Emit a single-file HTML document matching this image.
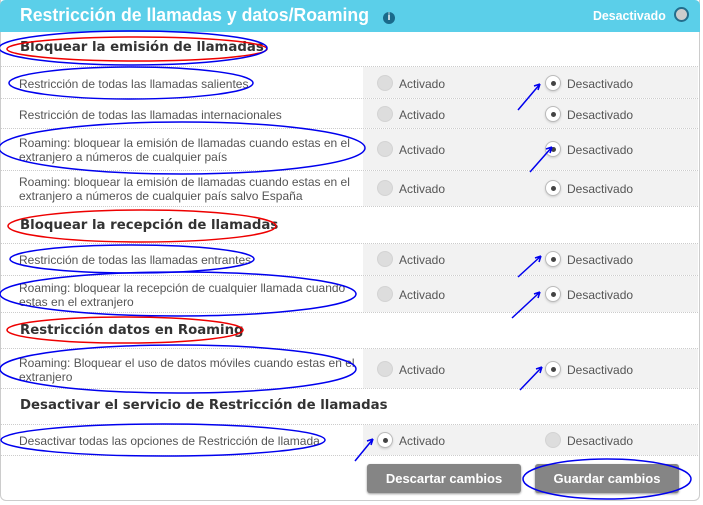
<!DOCTYPE html>
<html><head><meta charset="utf-8"><style>
*{margin:0;padding:0;box-sizing:border-box}
body{width:703px;height:505px;background:#fff;font-family:"Liberation Sans",Arial,sans-serif;position:relative;overflow:hidden}
.panel{position:absolute;left:0;top:0;width:700px;height:501px;border:1px solid #ccc;border-top:none;border-radius:0 0 6px 6px}
.hdr{position:absolute;left:0;top:0;width:700px;height:32px;background:#5bcfe9;border-radius:5px 5px 0 0}
.title{position:absolute;left:20px;top:5px;color:#fff;font-weight:bold;font-size:18px;white-space:nowrap;transform:scaleX(.98);transform-origin:left}
.info{position:absolute;left:383px;top:12px;width:12px;height:12px;border-radius:50%;background:#1a6a8a;color:#fff;font-size:10px;font-weight:bold;text-align:center;line-height:12px}
.hd{position:absolute;left:593px;top:8px;color:#fff;font-weight:bold;font-size:13px;transform:scaleX(.95);transform-origin:left}
.ht{position:absolute;left:674px;top:7px;width:15px;height:15px;border-radius:50%;background:#ccc;border:2px solid #236d8c}
.sec{position:absolute;left:20px;font-weight:bold;font-size:13.3px;color:#333;white-space:nowrap;font-family:"DejaVu Sans",sans-serif}
.row{position:absolute;left:1px;width:697px;border-top:1px dotted #ccc}
.row .g{position:absolute;left:362px;top:0;right:0;bottom:0;background:#f2f2f2}
.lb{position:absolute;left:19px;font-size:12px;color:#555;line-height:14px;width:345px}
.r{position:absolute;width:16px;height:16px;border-radius:50%}
.off{background:#ddd;border:1px solid #d3d3d3}
.on{background:#fff;border:1px solid #bbb;box-shadow:0 1px 2px #ccc}
.on:after{content:"";position:absolute;left:5px;top:5px;width:5px;height:5px;border-radius:50%;background:#444}
.rt{position:absolute;font-size:12px;color:#555}
.btn{position:absolute;top:464px;height:29px;background:#858585;border-radius:3px;color:#fff;font-weight:bold;font-size:13px;text-align:center;line-height:29px;box-shadow:0 1px 2px #999}
</style></head><body>
<div class="panel"></div>
<div class="hdr"></div>
<div class="title">Restricción de llamadas y datos/Roaming</div>
<div class="info">i</div>
<div class="hd">Desactivado</div>
<div class="ht"></div>

<div class="sec" style="top:40px">Bloquear la emisión de llamadas</div>
<div class="row" style="top:66px;height:32px"><div class="g"></div></div>
<div class="row" style="top:98px;height:30px"><div class="g"></div></div>
<div class="row" style="top:128px;height:42px"><div class="g"></div></div>
<div class="row" style="top:170px;height:37px;border-bottom:1px dotted #ccc"><div class="g"></div></div>
<div class="sec" style="top:218px">Bloquear la recepción de llamadas</div>
<div class="row" style="top:243px;height:32px"><div class="g"></div></div>
<div class="row" style="top:275px;height:38px;border-bottom:1px dotted #ccc"><div class="g"></div></div>
<div class="sec" style="top:323px">Restricción datos en Roaming</div>
<div class="row" style="top:348px;height:41px;border-bottom:1px dotted #ccc"><div class="g"></div></div>
<div class="sec" style="top:398px">Desactivar el servicio de Restricción de llamadas</div>
<div class="row" style="top:424px;height:32px;border-bottom:1px dotted #ccc"><div class="g"></div></div>

<div class="lb" style="top:77px">Restricción de todas las llamadas salientes</div>
<div class="lb" style="top:108px">Restricción de todas las llamadas internacionales</div>
<div class="lb" style="top:136px">Roaming: bloquear la emisión de llamadas cuando estas en el extranjero a números de cualquier país</div>
<div class="lb" style="top:175px">Roaming: bloquear la emisión de llamadas cuando estas en el extranjero a números de cualquier país salvo España</div>
<div class="lb" style="top:253px">Restricción de todas las llamadas entrantes</div>
<div class="lb" style="top:281px">Roaming: bloquear la recepción de cualquier llamada cuando estas en el extranjero</div>
<div class="lb" style="top:356px">Roaming: Bloquear el uso de datos móviles cuando estas en el extranjero</div>
<div class="lb" style="top:434px">Desactivar todas las opciones de Restricción de llamada</div>

<div class="r off" style="left:377px;top:75px"></div><div class="rt" style="left:399px;top:77px">Activado</div>
<div class="r on" style="left:545px;top:75px"></div><div class="rt" style="left:567px;top:77px">Desactivado</div>
<div class="r off" style="left:377px;top:106px"></div><div class="rt" style="left:399px;top:108px">Activado</div>
<div class="r on" style="left:545px;top:106px"></div><div class="rt" style="left:567px;top:108px">Desactivado</div>
<div class="r off" style="left:377px;top:141px"></div><div class="rt" style="left:399px;top:143px">Activado</div>
<div class="r on" style="left:545px;top:141px"></div><div class="rt" style="left:567px;top:143px">Desactivado</div>
<div class="r off" style="left:377px;top:180px"></div><div class="rt" style="left:399px;top:182px">Activado</div>
<div class="r on" style="left:545px;top:180px"></div><div class="rt" style="left:567px;top:182px">Desactivado</div>
<div class="r off" style="left:377px;top:251px"></div><div class="rt" style="left:399px;top:253px">Activado</div>
<div class="r on" style="left:545px;top:251px"></div><div class="rt" style="left:567px;top:253px">Desactivado</div>
<div class="r off" style="left:377px;top:286px"></div><div class="rt" style="left:399px;top:288px">Activado</div>
<div class="r on" style="left:545px;top:286px"></div><div class="rt" style="left:567px;top:288px">Desactivado</div>
<div class="r off" style="left:377px;top:361px"></div><div class="rt" style="left:399px;top:363px">Activado</div>
<div class="r on" style="left:545px;top:361px"></div><div class="rt" style="left:567px;top:363px">Desactivado</div>
<div class="r on" style="left:377px;top:432px"></div><div class="rt" style="left:399px;top:434px">Activado</div>
<div class="r off" style="left:545px;top:432px"></div><div class="rt" style="left:567px;top:434px">Desactivado</div>

<div class="btn" style="left:367px;width:154px">Descartar cambios</div>
<div class="btn" style="left:535px;width:144px">Guardar cambios</div>

<svg style="position:absolute;left:0;top:0" width="703" height="505" fill="none" stroke-width="1.5">
<g stroke="#e00">
<ellipse cx="137" cy="49" rx="130" ry="12"/>
<ellipse cx="142" cy="226" rx="134" ry="16"/>
<ellipse cx="125" cy="330" rx="118" ry="13"/>
</g>
<g stroke="#00e">
<ellipse cx="133" cy="48" rx="134" ry="17"/>
<ellipse cx="131" cy="83" rx="122" ry="16"/>
<ellipse cx="182" cy="148" rx="183" ry="26"/>
<ellipse cx="132" cy="259" rx="122" ry="14"/>
<ellipse cx="178" cy="294" rx="178" ry="22"/>
<ellipse cx="178" cy="369" rx="178" ry="24"/>
<ellipse cx="163" cy="440" rx="162" ry="16"/>
<ellipse cx="607" cy="479" rx="84" ry="20"/>
<path d="M518 110 L540 84 M540 84 L534 86 M540 84 L538 90"/>
<path d="M530 172 L552 147 M552 147 L546 149 M552 147 L550 153"/>
<path d="M518 277 L541 256 M541 256 L535 258 M541 256 L539 262"/>
<path d="M512 318 L540 292 M540 292 L534 294 M540 292 L538 298"/>
<path d="M520 390 L542 367 M542 367 L536 369 M542 367 L540 373"/>
<path d="M355 461 L373 439 M373 439 L367 441 M373 439 L371 445"/>
</g>
</svg>
</body></html>
